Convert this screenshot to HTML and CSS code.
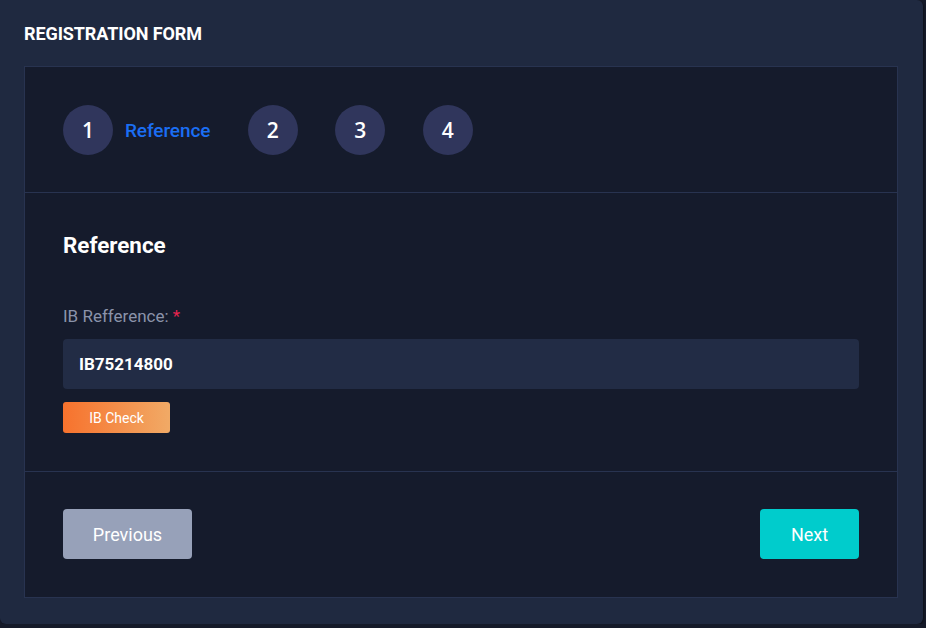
FILE: index.html
```html
<!DOCTYPE html>
<html>
<head>
<meta charset="utf-8">
<link rel="stylesheet" href="styles.css">
</head>
<body>
<div class="card">
  <div class="card-header">REGISTRATION FORM</div>
  <div class="wizard">
    <div class="steps">
      <div class="step active"><span class="num">1</span><span class="step-label">Reference</span></div>
      <div class="step"><span class="num">2</span></div>
      <div class="step"><span class="num">3</span></div>
      <div class="step"><span class="num">4</span></div>
    </div>
    <div class="content">
      <h3 class="section-title">Reference</h3>
      <label class="field-label">IB Refference: <span class="req">*</span></label>
      <div class="input">IB75214800</div>
      <button class="check-btn">IB Check</button>
    </div>
    <div class="actions">
      <button class="btn btn-prev">Previous</button>
      <button class="btn btn-next">Next</button>
    </div>
  </div>
</div>
</body>
</html>
```
FILE: styles.css
```css
html, body {
  margin: 0;
  padding: 0;
  background: #151a29;
  font-family: Roboto, "Liberation Sans", sans-serif;
}
.card {
  width: 923px;
  height: 624px;
  box-sizing: border-box;
  background: #1f2940;
  border-radius: 0 6px 6px 6px;
  padding: 0 25px 26px 24px;
  display: flex;
  flex-direction: column;
  box-shadow: 1px 1px 2px rgba(0,0,0,0.4);
}
.card-header {
  height: 66px;
  display: flex;
  align-items: center;
  color: #ffffff;
  font-weight: 700;
  font-size: 18px;
  letter-spacing: -0.1px;
}
.wizard {
  flex: 1;
  background: #151b2c;
  border: 1px solid #283350;
  display: flex;
  flex-direction: column;
}
.steps {
  display: flex;
  align-items: center;
  padding: 38px 38px 37px;
  border-bottom: 1px solid #283350;
  gap: 37.5px;
}
.step {
  display: flex;
  align-items: center;
  gap: 12px;
}
.num {
  width: 50px;
  height: 50px;
  border-radius: 50%;
  background: #30365c;
  color: #ffffff;
  font-family: "Open Sans", "Noto Sans", sans-serif;
  font-weight: 600;
  font-size: 21px;
  display: flex;
  align-items: center;
  justify-content: center;
}
.step-label {
  color: #1b6ef3;
  font-size: 19px;
  font-weight: 500;
  letter-spacing: -0.1px;
}
.content {
  padding: 39px 38px 38px;
  border-bottom: 1px solid #283350;
  display: flex;
  flex-direction: column;
  align-items: flex-start;
}
.section-title {
  margin: 0;
  color: #ffffff;
  font-size: 22.4px;
  font-weight: 700;
  line-height: 26px;
}
.field-label {
  margin-top: 47px;
  color: #8b93aa;
  font-size: 17px;
  line-height: 22px;
}
.req {
  color: #e8244f;
}
.input {
  margin-top: 12px;
  align-self: stretch;
  height: 50px;
  box-sizing: border-box;
  background: #222c45;
  border-radius: 4px;
  padding: 0 16px;
  display: flex;
  align-items: center;
  color: #ffffff;
  font-weight: 700;
  font-size: 17px;
}
.check-btn {
  margin-top: 13px;
  width: 107px;
  height: 31px;
  border: none;
  border-radius: 3px;
  background: linear-gradient(90deg, #f7722d, #f1aa66);
  color: #ffffff;
  font-family: Roboto, sans-serif;
  font-size: 14px;
  padding: 0;
}
.actions {
  flex: 1;
  display: flex;
  justify-content: space-between;
  align-items: flex-start;
  padding: 37px 38px 0;
}
.btn {
  height: 50px;
  border: none;
  border-radius: 4px;
  color: #ffffff;
  font-family: Roboto, sans-serif;
  font-size: 18px;
  padding: 0;
}
.btn-prev {
  width: 129px;
  background: #97a1b9;
}
.btn-next {
  width: 99px;
  background: #00cccc;
}
```
